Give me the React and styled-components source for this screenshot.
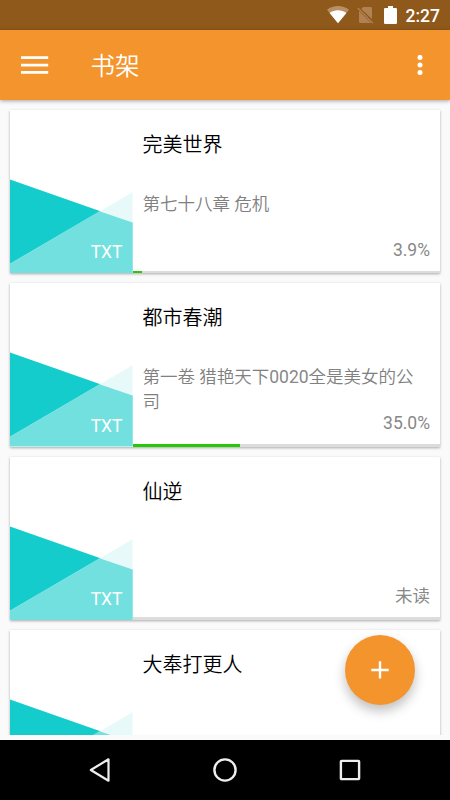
import React from "react";
import styled, { createGlobalStyle } from "styled-components";

const books = [
  { title: "完美世界", chapter: "第七十八章 危机", status: "3.9%", progress: 3.2 },
  { title: "都市春潮", chapter: "第一卷 猎艳天下0020全是美女的公司", status: "35.0%", progress: 35 },
  { title: "仙逆", chapter: "", status: "未读", progress: 0 },
  { title: "大奉打更人", chapter: "", progress: 0 },
];

const BookCover = ({ format }) => (
  <Cover>
    <CoverArt viewBox="0 0 122.5 163.33" preserveAspectRatio="none">
      <path d="M0 69.5L122.5 112.5V163.33H0z" fill="#14cccc" />
      <path d="M0 153.8L122.5 82.3V163.33H0z" fill="#e8f9f9" />
      <path d="M0 153.8L89.5 101.2L122.5 112.5V163.33H0z" fill="#73e0e0" />
    </CoverArt>
    {format && <Format>{format}</Format>}
  </Cover>
);

const BookCard = ({ book }) => (
  <Card>
    <BookCover format={book.status && "TXT"} />
    <Info>
      <Details>
        <BookTitle>{book.title}</BookTitle>
        <Chapter>
          {book.chapter
            .split(/(\d+)/)
            .map((part, i) => (i % 2 ? <Digits key={i}>{part}</Digits> : part))}
        </Chapter>
        {book.status && <Status>{book.status}</Status>}
      </Details>
      <Track>
        <Bar style={{ width: `${book.progress}%` }} />
      </Track>
    </Info>
  </Card>
);

const App = () => {
  return (
    <>
      <GlobalStyle />
      <Screen>
        <StatusBar>
          <svg width="22" height="18" viewBox="0 0 22 18">
            <path d="M0 3.7C6.5-1.2 15.5-1.2 22 3.7L11 17.3z" fill="#b98f65" />
            <path d="M2.6 6.9C7.5 3.3 14.5 3.3 19.4 6.9L11 17.3z" fill="#fff" />
          </svg>
          <NoSim width="17" height="18" viewBox="0 0 17 18">
            <path d="M6.2.9H13.8Q15 .9 15 2.1V12.9L4.2 2.9z" fill="#b18154" />
            <path d="M2 4.9L14 16.9H3.5Q2 16.9 2 15.4z" fill="#b18154" />
            <path d="M.8 2L15.8 17.2" stroke="#b18154" strokeWidth="1.3" />
          </NoSim>
          <Battery width="13" height="18" viewBox="0 0 13 18">
            <path
              d="M4 0H9V2H11.8Q13 2 13 3.2V16.8Q13 18 11.8 18H1.2Q0 18 0 16.8V3.2Q0 2 1.2 2H4z"
              fill="#fff"
            />
          </Battery>
          <Clock>2:27</Clock>
        </StatusBar>

        <Toolbar>
          <MenuButton aria-label="菜单">
            <svg width="28" height="18" viewBox="0 0 28 18">
              <path d="M0 1.6H27.2M0 9.1H27.2M0 16.3H27.2" stroke="#fff" strokeWidth="2.7" />
            </svg>
          </MenuButton>
          <PageTitle>书架</PageTitle>
          <MoreButton aria-label="更多">
            <svg width="6" height="20" viewBox="0 0 6 20">
              <circle cx="3" cy="2.4" r="2.5" fill="#fff" />
              <circle cx="3" cy="9.9" r="2.5" fill="#fff" />
              <circle cx="3" cy="17.4" r="2.5" fill="#fff" />
            </svg>
          </MoreButton>
        </Toolbar>

        <Shelf>
          {books.map((book) => (
            <BookCard key={book.title} book={book} />
          ))}
        </Shelf>

        <AddButton aria-label="添加">
          <svg width="18" height="18" viewBox="0 0 18 18">
            <path d="M9 .2V17.6M.3 9H17.7" stroke="#fff" strokeWidth="2.4" />
          </svg>
        </AddButton>

        <NavBar>
          <svg width="24" height="26" viewBox="0 0 24 26">
            <path
              d="M20.5 2.3V23.7L2.8 13z"
              fill="none"
              stroke="#eee"
              strokeWidth="2.2"
              strokeLinejoin="round"
            />
          </svg>
          <svg width="24" height="24" viewBox="0 0 24 24">
            <circle cx="12" cy="12" r="10.6" fill="none" stroke="#eee" strokeWidth="2.4" />
          </svg>
          <svg width="24" height="24" viewBox="0 0 24 24">
            <rect x="2.9" y="2.9" width="18.2" height="18.2" rx=".6" fill="none" stroke="#eee" strokeWidth="2.4" />
          </svg>
        </NavBar>
      </Screen>
    </>
  );
};

// ========== ESTILOS ==========
const GlobalStyle = createGlobalStyle`
  * {
    box-sizing: border-box;
  }
  body {
    margin: 0;
    font-family: Roboto, "Noto Sans CJK SC", sans-serif;
  }
  svg {
    display: block;
    flex-shrink: 0;
  }
`;

const Screen = styled.div`
  position: relative;
  display: flex;
  flex-direction: column;
  width: 450px;
  height: 800px;
  overflow: hidden;
  background: #fafafa;
`;

const StatusBar = styled.div`
  display: flex;
  align-items: center;
  justify-content: flex-end;
  flex-shrink: 0;
  height: 30px;
  padding-right: 10px;
  background: #8f591b;
`;

const NoSim = styled.svg`
  margin-left: 8px;
`;

const Battery = styled.svg`
  margin-left: 10px;
`;

const Clock = styled.span`
  margin-left: 9px;
  padding-top: 2px;
  color: #fff;
  font-size: 17.5px;
  font-weight: 500;
  line-height: 28px;
`;

const Toolbar = styled.header`
  position: relative;
  z-index: 1;
  display: flex;
  align-items: center;
  flex-shrink: 0;
  height: 70px;
  padding: 0 27px 0 21px;
  background: #f4942d;
  box-shadow: 0 1px 4px rgba(0, 0, 0, 0.35);
`;

const IconButton = styled.button`
  display: flex;
  padding: 0;
  border: none;
  background: none;
  cursor: pointer;
`;

const MenuButton = styled(IconButton)`
  width: 28px;
`;

const MoreButton = styled(IconButton)`
  margin-left: auto;
`;

const PageTitle = styled.h1`
  margin: 0 0 0 41.5px;
  padding-top: 3px;
  color: #fff;
  font-size: 24.5px;
  font-weight: 350;
  line-height: 36px;
`;

const Shelf = styled.main`
  display: flex;
  flex-direction: column;
  gap: 10px;
  height: 635px;
  flex-shrink: 0;
  padding: 10px 10px 0;
  overflow: hidden;
`;

const Card = styled.article`
  display: flex;
  flex-shrink: 0;
  height: 163.33px;
  background: #fff;
  box-shadow: 0 1px 2.5px rgba(0, 0, 0, 0.32);
`;

const Cover = styled.div`
  display: grid;
  width: 122.5px;
  height: 100%;
  flex-shrink: 0;
`;

const CoverArt = styled.svg`
  grid-area: 1 / 1;
  width: 100%;
  height: 100%;
`;

const Format = styled.span`
  grid-area: 1 / 1;
  place-self: end;
  z-index: 1;
  padding: 0 10px 10px 0;
  color: #fff;
  font-size: 17.5px;
  line-height: 21px;
`;

const Info = styled.div`
  display: flex;
  flex: 1;
  flex-direction: column;
  min-width: 0;
`;

const Details = styled.div`
  display: flex;
  flex: 1;
  flex-direction: column;
  min-height: 0;
  padding: 20px 10px 10px;
`;

const BookTitle = styled.h2`
  margin: 0;
  color: #000;
  font-size: 20px;
  font-weight: 350;
  line-height: 30px;
`;

const Chapter = styled.p`
  margin: 32px 0 -6px;
  color: #808080;
  font-size: 17.5px;
  font-weight: 350;
  line-height: 25px;
`;

const Digits = styled.span`
  color: #888;
  font-weight: 400;
`;

const Status = styled.span`
  margin-top: auto;
  align-self: flex-end;
  height: 21px;
  color: #888;
  font-size: 17.5px;
  line-height: 21px;
`;

const Track = styled.div`
  height: 2.5px;
  flex-shrink: 0;
  background: #dcdcdc;
`;

const Bar = styled.div`
  height: 100%;
  background: #28c808;
`;

const AddButton = styled.button`
  position: absolute;
  right: 35px;
  bottom: 95px;
  z-index: 2;
  display: flex;
  align-items: center;
  justify-content: center;
  width: 70px;
  height: 70px;
  padding: 0;
  border: none;
  border-radius: 50%;
  background: #f4942d;
  box-shadow: 0 6px 12px rgba(0, 0, 0, 0.25);
  cursor: pointer;
`;

const NavBar = styled.nav`
  display: flex;
  align-items: center;
  justify-content: center;
  gap: 101px;
  flex-shrink: 0;
  height: 60px;
  margin-top: auto;
  background: #000;
`;

export default App;
